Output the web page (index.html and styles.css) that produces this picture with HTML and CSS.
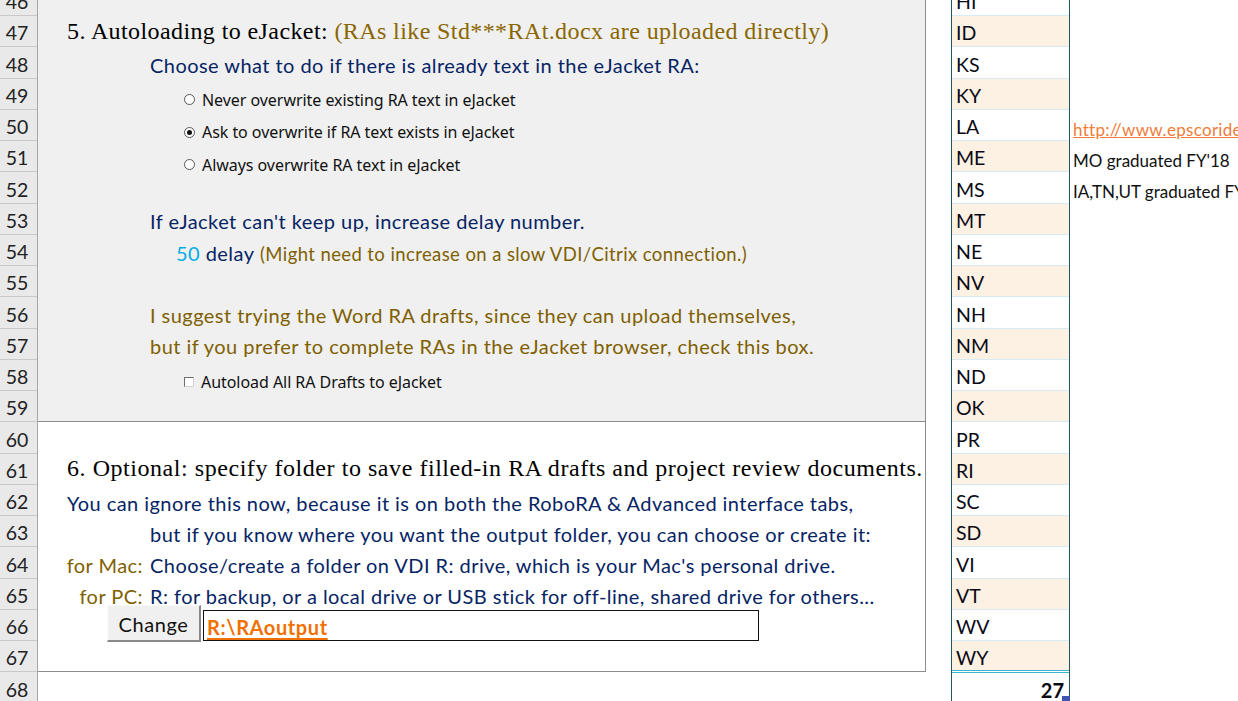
FILE: index.html
```html
<!DOCTYPE html>
<html>
<head>
<meta charset="utf-8">
<link rel="stylesheet" href="styles.css">
</head>
<body>
<div class="sheet">
  <div class="rowhdr">
    <div class="rn">46</div><div class="rn">47</div><div class="rn">48</div><div class="rn">49</div>
    <div class="rn">50</div><div class="rn">51</div><div class="rn">52</div><div class="rn">53</div>
    <div class="rn">54</div><div class="rn">55</div><div class="rn">56</div><div class="rn">57</div>
    <div class="rn">58</div><div class="rn">59</div><div class="rn">60</div><div class="rn">61</div>
    <div class="rn">62</div><div class="rn">63</div><div class="rn">64</div><div class="rn">65</div>
    <div class="rn">66</div><div class="rn">67</div><div class="rn">68</div>
  </div>

  <div class="main">
    <section class="panel p1">
      <div class="ln"></div>
      <div class="ln head"><span class="blk">5. Autoloading to eJacket:</span>&nbsp;<span class="gold2">(RAs like Std***RAt.docx are uploaded directly)</span></div>
      <div class="ln ind navy">Choose what to do if there is already text in the eJacket RA:</div>
      <div class="radios">
        <div class="opt"><span class="radio"></span><span>Never overwrite existing RA text in eJacket</span></div>
        <div class="opt"><span class="radio on"></span><span>Ask to overwrite if RA text exists in eJacket</span></div>
        <div class="opt"><span class="radio"></span><span>Always overwrite RA text in eJacket</span></div>
      </div>
      <div class="ln"></div>
      <div class="ln ind navy">If eJacket can't keep up, increase delay number.</div>
      <div class="ln ind2"><span class="cyan">50</span>&nbsp;<span class="navy">delay</span>&nbsp;<span class="gold small">(Might need to increase on a slow VDI/Citrix connection.)</span></div>
      <div class="ln"></div>
      <div class="ln ind gold">I suggest trying the Word RA drafts, since they can upload themselves,</div>
      <div class="ln ind gold">but if you prefer to complete RAs in the eJacket browser, check this box.</div>
      <div class="ln chkrow"><div class="opt"><span class="check"></span><span>Autoload All RA Drafts to eJacket</span></div></div>
      <div class="ln"></div>
    </section>

    <section class="panel p2">
      <div class="ln"></div>
      <div class="ln head head6">6. Optional: specify folder to save filled-in RA drafts and project review documents.</div>
      <div class="ln navy pad67">You can ignore this now, because it is on both the RoboRA &amp; Advanced interface tabs,</div>
      <div class="ln ind navy">but if you know where you want the output folder, you can choose or create it:</div>
      <div class="ln"><span class="lbl gold">for Mac:</span><span class="navy">Choose/create a folder on VDI R: drive, which is your Mac's personal drive.</span></div>
      <div class="ln"><span class="lbl gold">for PC:</span><span class="navy">R: for backup, or a local drive or USB stick for off-line, shared drive for others...</span></div>
      <div class="ln btnrow">
        <div class="btn">Change</div>
        <div class="field"><span class="path">R:\RAoutput</span></div>
      </div>
      <div class="ln"></div>
    </section>
    <div class="ln"></div>
  </div>

  <div class="gapcol"></div>

  <div class="states">
    <div class="st">HI</div><div class="st alt">ID</div><div class="st">KS</div><div class="st alt">KY</div>
    <div class="st">LA</div><div class="st alt">ME</div><div class="st">MS</div><div class="st alt">MT</div>
    <div class="st">NE</div><div class="st alt">NV</div><div class="st">NH</div><div class="st alt">NM</div>
    <div class="st">ND</div><div class="st alt">OK</div><div class="st">PR</div><div class="st alt">RI</div>
    <div class="st">SC</div><div class="st alt">SD</div><div class="st">VI</div><div class="st alt">VT</div>
    <div class="st">WV</div><div class="st alt">WY</div>
    <div class="st total">27<span class="handle"></span></div>
  </div>

  <div class="notes">
    <div class="nt"></div><div class="nt"></div><div class="nt"></div><div class="nt"></div>
    <div class="nt"><span class="link">http://www.epscoridea.org</span></div>
    <div class="nt">MO graduated FY'18</div>
    <div class="nt">IA,TN,UT graduated FY'19</div>
  </div>
</div>
</body>
</html>
```

FILE: styles.css
```css
html, body {
  margin: 0;
  padding: 0;
  background: #ffffff;
  overflow: hidden;
  height: 701px;
}

.sheet {
  display: flex;
  margin-top: -15.25px;
  font-family: "Lato", "Liberation Sans", sans-serif;
  font-size: 20px;
  letter-spacing: 0.45px;
  color: #000;
}

/* row headers */
.rowhdr {
  width: 38px;
  flex: none;
  display: flex;
  flex-direction: column;
  background: #e9e9e9;
  border-right: 1px solid #a6a6a6;
  box-sizing: border-box;
}
.rn {
  height: 31.25px;
  box-sizing: border-box;
  border-bottom: 1px solid #c9c9c9;
  display: flex;
  align-items: flex-end;
  justify-content: center;
  padding: 0 3px 2px 0;
  color: #222;
  font-size: 19.5px;
  letter-spacing: 0;
}

/* main area */
.main {
  width: 888px;
  flex: none;
  display: flex;
  flex-direction: column;
}
.panel {
  display: flex;
  flex-direction: column;
  border-right: 1px solid #8c8c8c;
  border-bottom: 1px solid #8c8c8c;
  box-sizing: border-box;
}
.p1 {
  background: #f0f0f0;
  height: 437.5px;
}
.p2 {
  background: #ffffff;
  height: 250px;
}
.ln {
  height: 31.25px;
  flex: none;
  display: flex;
  align-items: flex-end;
  white-space: nowrap;
  box-sizing: border-box;
  padding-bottom: 1.5px;
}
.ind { padding-left: 112px; }
.ind2 { padding-left: 138px; }
.pad67 { padding-left: 29px; }

.head {
  padding-left: 29px;
  padding-bottom: 2.5px;
  font-family: "Liberation Serif", "DejaVu Serif", serif;
  font-size: 24px;
  letter-spacing: 0.4px;
}
.head6 {
  letter-spacing: 0.55px;
}
.blk { color: #000; }
.gold2 { color: #8a6600; }

.navy { color: #062464; }
.gold { color: #7f6000; }
.cyan { color: #00aee8; }
.small {
  font-size: 18.5px;
  letter-spacing: 0.4px;
}

/* radio & checkbox controls */
.radios {
  height: 93.75px;
  flex: none;
  box-sizing: border-box;
  padding: 5px 0 0 146px;
  display: flex;
  flex-direction: column;
}
.opt {
  height: 32.5px;
  flex: none;
  display: flex;
  align-items: center;
  gap: 7px;
  font-family: "Noto Sans", "Open Sans", sans-serif;
  font-size: 16px;
  letter-spacing: -0.05px;
  color: #111;
}
.radio {
  width: 9px;
  height: 9px;
  border: 1px solid #555;
  border-radius: 50%;
  background: #fff;
  display: flex;
  align-items: center;
  justify-content: center;
  flex: none;
}
.radio.on::after {
  content: "";
  width: 5px;
  height: 5px;
  border-radius: 50%;
  background: #111;
}
.chkrow {
  padding-left: 146px;
  align-items: flex-start;
  padding-top: 10px;
  padding-bottom: 0;
}
.chkrow .opt { height: 24px; }
.check {
  width: 8px;
  height: 8px;
  border-top: 1px solid #6e6e6e;
  border-left: 1px solid #6e6e6e;
  border-right: 1px solid #d0d0d0;
  border-bottom: 1px solid #d0d0d0;
  background: #fff;
  flex: none;
}

.lbl {
  width: 112px;
  flex: none;
  text-align: right;
  padding-right: 7px;
  box-sizing: border-box;
}

/* change button + field */
.btnrow {
  padding-left: 69px;
  align-items: flex-end;
  padding-bottom: 0;
}
.btn {
  width: 94px;
  height: 37px;
  box-sizing: border-box;
  margin-bottom: -1px;
  background: #f0f0f0;
  border-top: 1px solid #fafafa;
  border-left: 1px solid #fafafa;
  border-right: 2px solid #8a8a8a;
  border-bottom: 2px solid #8a8a8a;
  display: flex;
  align-items: center;
  justify-content: center;
  color: #111;
  font-size: 20px;
  letter-spacing: 0.6px;
  padding-top: 1px;
}
.field {
  margin-left: 2px;
  width: 556px;
  height: 31px;
  box-sizing: border-box;
  border: 1.5px solid #111;
  background: #fff;
  display: flex;
  align-items: flex-end;
  padding: 0 0 1px 3px;
}
.path {
  color: #f07000;
  font-weight: bold;
  text-decoration: underline;
  text-underline-offset: 3px;
  font-size: 20px;
  letter-spacing: 0.6px;
}

/* gap */
.gapcol {
  width: 25px;
  flex: none;
}

/* states table */
.states {
  width: 119px;
  flex: none;
  display: flex;
  flex-direction: column;
  border-left: 1px solid #235560;
  border-right: 1px solid #235560;
  box-sizing: border-box;
}
.st {
  height: 31.25px;
  flex: none;
  box-sizing: border-box;
  border-bottom: 1.5px solid #d8ebf4;
  background: #fff;
  display: flex;
  align-items: flex-end;
  padding: 0 0 2px 4px;
  font-size: 19.5px;
  letter-spacing: 0;
  color: #0a0a14;
}
.st.alt { background: #fdf1e4; }
.st.total {
  position: relative;
  border-bottom: none;
  border-top: 3px double #3bb4cc;
  justify-content: flex-end;
  padding-right: 5px;
  font-weight: bold;
  font-size: 20px;
  height: 34px;
  margin-top: -2px;
}
.handle {
  position: absolute;
  right: -1px;
  bottom: 1px;
  width: 8px;
  height: 7px;
  background: #3d56b2;
}

/* notes */
.notes {
  flex: 1;
  min-width: 0;
  display: flex;
  flex-direction: column;
  overflow: hidden;
}
.nt {
  height: 31.25px;
  flex: none;
  display: flex;
  align-items: flex-end;
  padding: 0 0 1.5px 3px;
  box-sizing: border-box;
  white-space: nowrap;
  font-size: 17px;
  letter-spacing: 0;
  color: #111;
}
.link {
  color: #f07c3a;
  text-decoration: underline;
  letter-spacing: 0.3px;
}
```
